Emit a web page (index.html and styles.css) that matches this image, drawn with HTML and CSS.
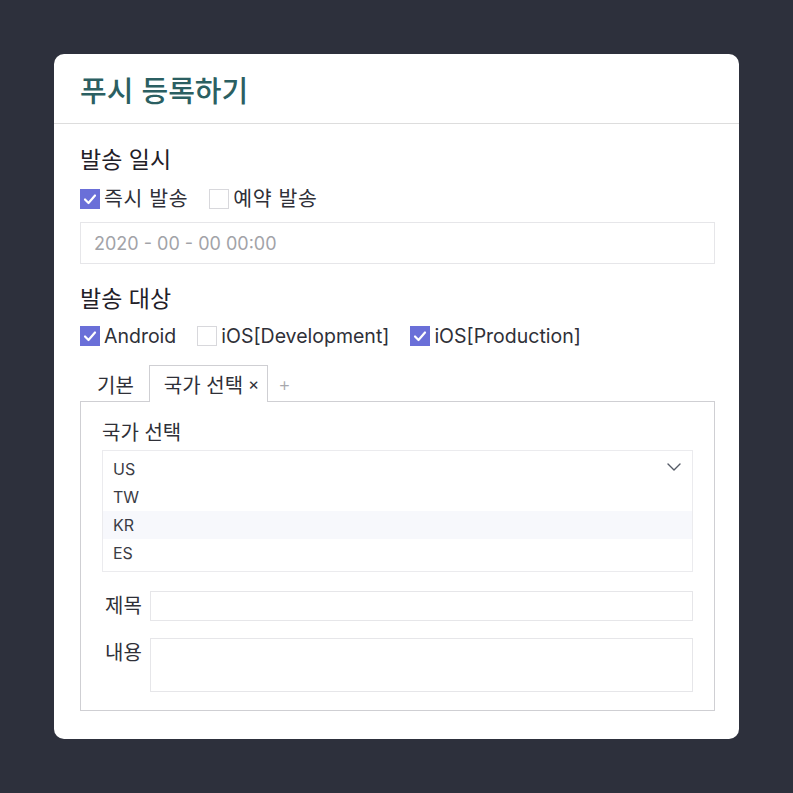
FILE: index.html
```html
<!DOCTYPE html>
<html lang="ko">
<head>
<meta charset="utf-8">
<title>푸시 등록하기</title>
<link rel="stylesheet" href="styles.css">
</head>
<body>
<div class="card">
  <div class="card-header"><h1 class="title">푸시 등록하기</h1></div>
  <div class="card-body">
    <h2 class="section-title first">발송 일시</h2>
    <div class="check-row">
      <label class="check"><span class="box checked"><svg viewBox="0 0 20 20" width="20" height="20"><path d="M5 10.5 L8.5 14 L15 6.5" fill="none" stroke="#fff" stroke-width="2.2" stroke-linecap="round" stroke-linejoin="round"/></svg></span><span class="check-label ko">즉시 발송</span></label>
      <label class="check"><span class="box"></span><span class="check-label ko">예약 발송</span></label>
    </div>
    <div class="text-input date">2020 - 00 - 00 00:00</div>

    <h2 class="section-title">발송 대상</h2>
    <div class="check-row second">
      <label class="check"><span class="box checked"><svg viewBox="0 0 20 20" width="20" height="20"><path d="M5 10.5 L8.5 14 L15 6.5" fill="none" stroke="#fff" stroke-width="2.2" stroke-linecap="round" stroke-linejoin="round"/></svg></span><span class="check-label">Android</span></label>
      <label class="check"><span class="box"></span><span class="check-label">iOS[Development]</span></label>
      <label class="check"><span class="box checked"><svg viewBox="0 0 20 20" width="20" height="20"><path d="M5 10.5 L8.5 14 L15 6.5" fill="none" stroke="#fff" stroke-width="2.2" stroke-linecap="round" stroke-linejoin="round"/></svg></span><span class="check-label">iOS[Production]</span></label>
    </div>

    <div class="tabs">
      <div class="tab">기본</div>
      <div class="tab active">국가 선택 <span class="close">×</span></div>
      <div class="tab add">+</div>
    </div>
    <div class="tab-panel">
      <div class="field-label">국가 선택</div>
      <div class="listbox">
        <div class="option">US</div>
        <div class="option">TW</div>
        <div class="option hover">KR</div>
        <div class="option">ES</div>
        <svg class="chevron" viewBox="0 0 14 8" width="14" height="8"><path d="M1 1 L7 7 L13 1" fill="none" stroke="#555a66" stroke-width="1.4" stroke-linecap="round" stroke-linejoin="round"/></svg>
      </div>
      <div class="form-row">
        <div class="row-label">제목</div>
        <div class="row-input short"></div>
      </div>
      <div class="form-row">
        <div class="row-label">내용</div>
        <div class="row-input tall"></div>
      </div>
    </div>
  </div>
</div>
</body>
</html>
```

FILE: styles.css
```css
* { box-sizing: border-box; }
html, body { margin: 0; padding: 0; }
body {
  background: #2d303c;
  font-family: "Inter", "Noto Sans CJK KR", sans-serif;
  color: #2f3038;
  width: 793px;
  height: 793px;
  padding: 54px;
}
.card {
  width: 685px;
  height: 685px;
  background: #fff;
  border-radius: 10px;
  overflow: hidden;
}
.card-header {
  height: 70px;
  border-bottom: 1px solid #dddddd;
  padding-left: 26px;
  display: flex;
  align-items: center;
}
.title {
  margin: 0;
  font-family: "Noto Sans CJK KR", sans-serif;
  font-size: 29px;
  font-weight: 500;
  color: #2b5f62;
  line-height: 36px;
  padding-top: 1px;
}
.card-body {
  padding: 0 24px 0 26px;
  display: flex;
  flex-direction: column;
}
.section-title {
  margin: 19px 0 0;
  font-family: "Noto Sans CJK KR", sans-serif;
  font-size: 23px;
  font-weight: 400;
  line-height: 30px;
  color: #1f2028;
}
.check-row {
  display: flex;
  align-items: center;
  gap: 21px;
  height: 24px;
  margin-top: 14px;
}
.check-row.second { margin-top: 12px; }
.check {
  display: flex;
  align-items: center;
  gap: 4px;
}
.box {
  width: 20px;
  height: 20px;
  border: 1px solid #d8d8dc;
  background: #fff;
  display: block;
}
.box.checked {
  background: #6a6fd8;
  border-color: #6a6fd8;
}
.box svg { display: block; margin: -1px; }
.check-label {
  font-size: 19.5px;
  line-height: 24px;
  color: #2f3038;
}
.check-label.ko {
  font-size: 20.5px;
  letter-spacing: 0.6px;
}
.text-input {
  border: 1px solid #e6e6e9;
  height: 42px;
  margin-top: 11px;
  padding-left: 13px;
  display: flex;
  align-items: center;
  font-size: 18px;
  color: #a2a3a8;
}
.date + .section-title { margin-top: 18px; }
.tabs {
  display: flex;
  align-items: flex-end;
  margin-top: 17px;
  height: 37px;
  margin-bottom: -1px;
  position: relative;
  z-index: 1;
}
.tab {
  height: 37px;
  padding: 0 14px 0 16px;
  display: flex;
  align-items: center;
  font-size: 20px;
  color: #2f3038;
  border: 1px solid transparent;
  border-bottom: none;
}
.tab.active {
  background: #fff;
  border-color: #cfcfd3;
  padding: 0 8px 0 14px;
}
.close {
  font-size: 17px;
  margin-left: 5px;
}
.tab.add {
  color: #a7a8ad;
  font-size: 19px;
  font-weight: 300;
  padding: 0 9px;
}
.tab-panel {
  border: 1px solid #cfcfd3;
  height: 310px;
  padding: 16px 21px 0 21px;
  display: flex;
  flex-direction: column;
}
.field-label {
  font-size: 20px;
  line-height: 28px;
  color: #2f3038;
  font-family: "Noto Sans CJK KR", sans-serif;
}
.listbox {
  position: relative;
  margin-top: 4px;
  border: 1px solid #ebebee;
  padding: 4px 0;
}
.option {
  height: 28px;
  padding-left: 10px;
  display: flex;
  align-items: center;
  font-size: 16px;
  color: #3b3c45;
}
.option.hover { background: #f7f8fc; }
.chevron {
  position: absolute;
  right: 11px;
  top: 12px;
}
.form-row {
  display: flex;
  align-items: flex-start;
  margin-top: 19px;
}
.form-row + .form-row { margin-top: 17px; }
.row-label {
  width: 48px;
  padding-left: 3px;
  font-size: 20px;
  line-height: 28px;
  color: #2f3038;
  font-family: "Noto Sans CJK KR", sans-serif;
}
.row-input {
  flex: 1;
  border: 1px solid #e6e6e9;
}
.row-input.short { height: 30px; }
.row-input.tall { height: 54px; }
```
